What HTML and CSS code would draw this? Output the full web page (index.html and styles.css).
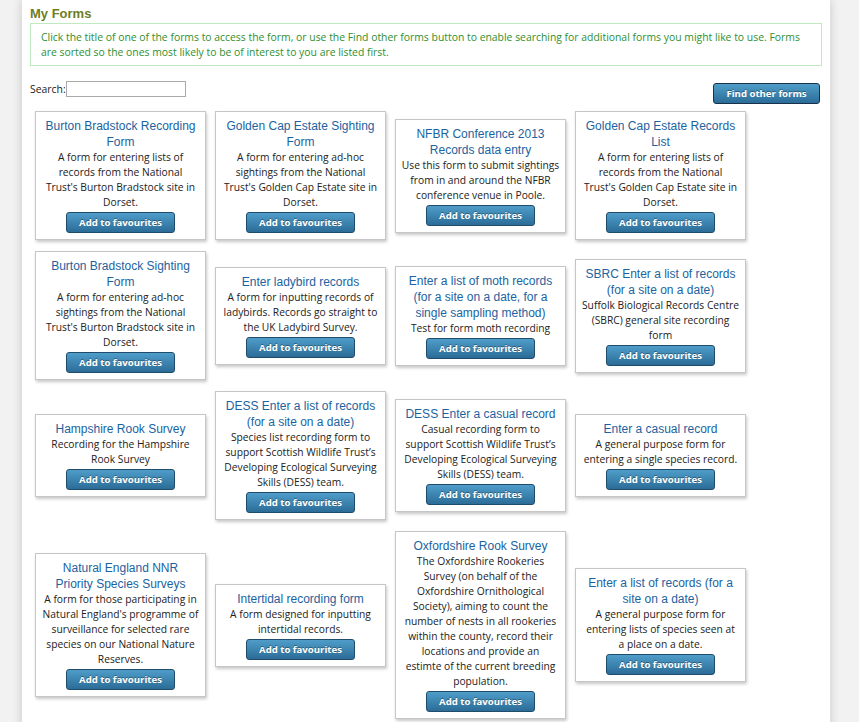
FILE: index.html
```html
<!DOCTYPE html>
<html>
<head>
<meta charset="utf-8">
<link rel="stylesheet" href="styles.css">
</head>
<body>
<div class="page">
  <h2 class="heading">My Forms</h2>
  <div class="info">Click the title of one of the forms to access the form, or use the Find other forms button to enable searching for additional forms you might like to use. Forms are sorted so the ones most likely to be of interest to you are listed first.</div>
  <div class="toolbar">
    <label class="search">Search:<input type="text" class="search-input"></label>
    <button class="btn btn-find">Find other forms</button>
  </div>
  <div class="cards">
    <div class="card"><a class="title">Burton Bradstock Recording Form</a><p class="desc">A form for entering lists of records from the National Trust's Burton Bradstock site in Dorset.</p><button class="btn">Add to favourites</button></div>
    <div class="card"><a class="title">Golden Cap Estate Sighting Form</a><p class="desc">A form for entering ad-hoc sightings from the National Trust's Golden Cap Estate site in Dorset.</p><button class="btn">Add to favourites</button></div>
    <div class="card"><a class="title">NFBR Conference 2013 Records data entry</a><p class="desc">Use this form to submit sightings from in and around the NFBR conference venue in Poole.</p><button class="btn">Add to favourites</button></div>
    <div class="card"><a class="title">Golden Cap Estate Records List</a><p class="desc">A form for entering lists of records from the National Trust's Golden Cap Estate site in Dorset.</p><button class="btn">Add to favourites</button></div>

    <div class="card"><a class="title">Burton Bradstock Sighting Form</a><p class="desc">A form for entering ad-hoc sightings from the National Trust's Burton Bradstock site in Dorset.</p><button class="btn">Add to favourites</button></div>
    <div class="card"><a class="title">Enter ladybird records</a><p class="desc">A form for inputting records of ladybirds. Records go straight to the UK Ladybird Survey.</p><button class="btn">Add to favourites</button></div>
    <div class="card"><a class="title">Enter a list of moth records (for a site on a date, for a single sampling method)</a><p class="desc">Test for form moth recording</p><button class="btn">Add to favourites</button></div>
    <div class="card"><a class="title">SBRC Enter a list of records (for a site on a date)</a><p class="desc">Suffolk Biological Records Centre (SBRC) general site recording form</p><button class="btn">Add to favourites</button></div>

    <div class="card"><a class="title">Hampshire Rook Survey</a><p class="desc">Recording for the Hampshire Rook Survey</p><button class="btn">Add to favourites</button></div>
    <div class="card"><a class="title">DESS Enter a list of records (for a site on a date)</a><p class="desc">Species list recording form to support Scottish Wildlife Trust’s Developing Ecological Surveying Skills (DESS) team.</p><button class="btn">Add to favourites</button></div>
    <div class="card"><a class="title">DESS Enter a casual record</a><p class="desc">Casual recording form to support Scottish Wildlife Trust’s Developing Ecological Surveying Skills (DESS) team.</p><button class="btn">Add to favourites</button></div>
    <div class="card"><a class="title">Enter a casual record</a><p class="desc">A general purpose form for entering a single species record.</p><button class="btn">Add to favourites</button></div>

    <div class="card"><a class="title">Natural England NNR Priority Species Surveys</a><p class="desc">A form for those participating in Natural England's programme of surveillance for selected rare species on our National Nature Reserves.</p><button class="btn">Add to favourites</button></div>
    <div class="card"><a class="title">Intertidal recording form</a><p class="desc">A form designed for inputting intertidal records.</p><button class="btn">Add to favourites</button></div>
    <div class="card"><a class="title">Oxfordshire Rook Survey</a><p class="desc">The Oxfordshire Rookeries Survey (on behalf of the Oxfordshire Ornithological Society), aiming to count the number of nests in all rookeries within the county, record their locations and provide an<br>estimte of the current breeding population.</p><button class="btn">Add to favourites</button></div>
    <div class="card"><a class="title">Enter a list of records (for a site on a date)</a><p class="desc">A general purpose form for entering lists of species seen at a&nbsp;place on a date.</p><button class="btn">Add to favourites</button></div>
  </div>
</div>
</body>
</html>
```

FILE: styles.css
```css
html, body {
  margin: 0;
  padding: 0;
}
body {
  background: #f2f2f2;
  font-family: "Open Sans", "DejaVu Sans", sans-serif;
  font-size: 10.4px;
  color: #222;
}
.page {
  margin-left: 22px;
  width: 808px;
  min-height: 722px;
  box-sizing: border-box;
  background: #fff;
  padding: 6px 8px 20px 8px;
  box-shadow: 0 0 10px rgba(0, 0, 0, 0.18);
}
.heading {
  margin: 0;
  font-family: "Liberation Sans", Arial, sans-serif;
  font-size: 13px;
  line-height: 16px;
  font-weight: bold;
  color: #6e7d22;
}
.info {
  margin-top: 1px;
  border: 1px solid #bfe9bf;
  padding: 6px 10px 5px 10px;
  line-height: 15px;
  color: #2f8f2f;
  font-size: 10.4px;
}
.toolbar {
  display: flex;
  justify-content: space-between;
  align-items: flex-start;
  margin-top: 15px;
  padding-right: 2px;
}
.search {
  display: flex;
  align-items: center;
  color: #222;
  font-size: 10.4px;
}
.search-input {
  width: 120px;
  height: 16px;
  box-sizing: border-box;
  border: 1px solid #a9a9a9;
  padding: 0;
  margin: 0;
}
.btn {
  font-family: "Open Sans", "DejaVu Sans", sans-serif;
  font-size: 9.6px;
  font-weight: bold;
  color: #fff;
  text-shadow: 0 -1px 0 rgba(0, 0, 0, 0.35);
  background: linear-gradient(#4f9dca, #2b6c97);
  border: 1px solid #1f4c6b;
  border-radius: 3px;
  height: 21px;
  width: 109px;
  padding: 0;
  margin: 0;
  cursor: pointer;
}
.btn-find {
  margin-top: 2px;
  width: 107px;
  height: 21px;
  border-color: #17324a;
}
.cards {
  display: flex;
  flex-wrap: wrap;
  align-items: center;
  column-gap: 9px;
  row-gap: 11px;
  margin-top: 7px;
  padding-left: 5px;
}
.card {
  width: 171px;
  box-sizing: border-box;
  border: 1px solid #c6c6c6;
  box-shadow: 1px 2px 3px rgba(0, 0, 0, 0.22);
  padding: 6px 5px 6px 5px;
  text-align: center;
  background: #fff;
}
.title {
  display: block;
  margin: 0 3px;
  font-family: "Liberation Sans", Arial, sans-serif;
  font-size: 12px;
  line-height: 16px;
  color: #1b63a0;
}
.desc {
  margin: 0 0.5px 2px 0.5px;
  line-height: 15px;
  font-size: 10.25px;
  color: #222;
}
```
